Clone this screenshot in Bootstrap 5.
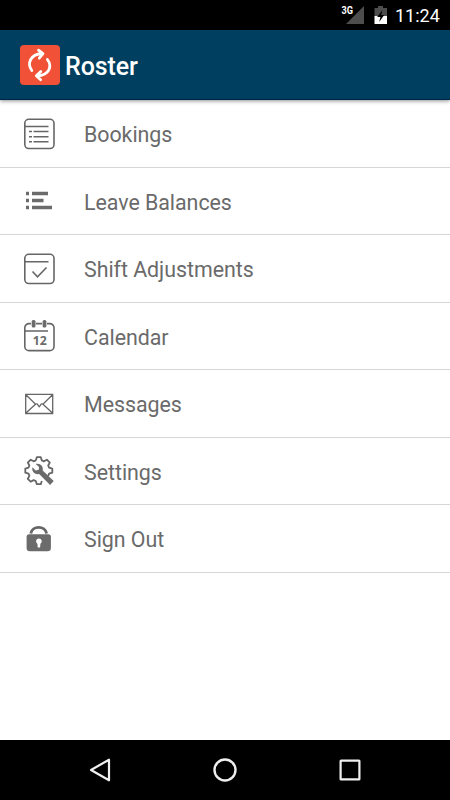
<!DOCTYPE html>
<html lang="en">
<head>
<meta charset="utf-8">
<meta name="viewport" content="width=device-width, initial-scale=1">
<title>Roster</title>
<link href="https://cdn.jsdelivr.net/npm/bootstrap@5.3.0/dist/css/bootstrap.min.css" rel="stylesheet">
<style>
  body { font-family: Roboto, sans-serif; height: 800px; overflow: hidden; }
  svg { display: block; flex: none; }
  .status-bar { height: 30px; padding-right: 10px; }
  .clock { font-size: 18px; line-height: 30px; font-weight: 400; margin-left: 8px; padding-top: 2px; width: 45px; white-space: nowrap; }
  .app-bar { height: 70px; padding: 0 20px; background: #003f5f; border-bottom: 1px solid #002447; box-shadow: 0 1px 4px rgba(0,0,0,.45); z-index: 1; }
  .app-title { font-size: 25px; line-height: 30px; font-weight: 500; margin-left: 5px; padding-top: 4px; letter-spacing: -.1px; }
  .menu-row { height: 67.5px; padding: 1px 21px 0; border-bottom: 1px solid #d6d6d6 !important; color: #6a6a6a; font-size: 21.4px; }
  .menu-row span { margin-left: 27px; padding-top: 3px; letter-spacing: -.04px; }
  .menu-row svg { fill: none; stroke: #666; stroke-width: 1.6; }
  .menu-row .solid { fill: #6b6b6b; stroke: none; }
  .nav-keys { height: 60px; padding: 0 87px; }
</style>
<script src="https://cdn.jsdelivr.net/npm/bootstrap@5.3.0/dist/js/bootstrap.bundle.min.js"></script>
</head>
<body class="d-flex flex-column bg-white m-0">

<div class="status-bar d-flex align-items-center justify-content-end bg-black text-white">
  <svg width="48" height="30" viewBox="0 0 48 30">
    <path d="M25 6V24H7z" fill="#4d4d4d"/>
    <text x="2.500" y="14" font-size="10" font-weight="700" fill="#fff" textLength="11.500" lengthAdjust="spacingAndGlyphs">3G</text>
    <path d="M39 6h5v2h4v9H35.500V8H39z" fill="#4d4d4d"/>
    <path d="M35.500 16H48v8H35.500z" fill="#fff"/>
    <path d="M43.500 10l-5.300 7h3.200l-1.200 5 5-7h-3z" fill="#000"/>
  </svg>
  <div class="clock">11:24</div>
</div>

<header class="app-bar d-flex align-items-center position-relative text-white">
  <svg width="40" height="40" viewBox="0 0 40 40">
    <rect width="40" height="40" rx="4" fill="#f15136"/>
    <g fill="none" stroke="#fff" stroke-width="2.800" stroke-linecap="round" stroke-linejoin="round">
      <path d="M11.800 25.500C7 19 9.800 9 22.500 8.500M18.500 5.200L23 8.700L19.300 13.200"/>
      <path d="M27.400 14.500C32.200 21 30 30 17 31M20.800 26.500L16.300 30.800L20.600 34.800"/>
    </g>
  </svg>
  <h1 class="app-title mb-0">Roster</h1>
</header>

<main class="flex-grow-1">
  <div class="list-group list-group-flush">
    <a class="menu-row d-flex align-items-center text-decoration-none" href="#">
      <svg width="36" height="36" viewBox="0 0 36 36">
        <rect x="3.800" y="3.300" width="29.200" height="29.200" rx="4"/>
        <path d="M4 10.500H27.500M12.500 15.500H27.500M12.500 20.700H27.500M12.500 25.700H27.500M8 15.500h3M8 20.700h3M8 25.700h3"/>
      </svg><span>Bookings</span>
    </a>
    <a class="menu-row d-flex align-items-center text-decoration-none" href="#">
      <svg width="36" height="36" viewBox="0 0 36 36">
        <path class="solid" d="M5 8.800h3v3.500H5zM11 8.800h16v3.500H11zM5 15.800h3v3.500H5zM11 15.800h11.500v3.500H11zM5 22.800h3v3.500H5zM11 22.800h20v3.500H11z"/>
      </svg><span>Leave Balances</span>
    </a>
    <a class="menu-row d-flex align-items-center text-decoration-none" href="#">
      <svg width="36" height="36" viewBox="0 0 36 36">
        <rect x="3.800" y="3.300" width="29.200" height="29.200" rx="4"/>
        <path d="M4 10.800H27.500M11.500 20.500L16.500 25.800L25.500 16.500"/>
      </svg><span>Shift Adjustments</span>
    </a>
    <a class="menu-row d-flex align-items-center text-decoration-none" href="#">
      <svg width="36" height="36" viewBox="0 0 36 36">
        <path d="M10 5.600H8a4.200 4.200 0 0 0-4.200 4.200V28.400a4.200 4.200 0 0 0 4.200 4.200H28.800a4.200 4.200 0 0 0 4.200-4.200V9.800a4.200 4.200 0 0 0-4.200-4.200H26M15 5.600H21M4 13H27"/>
        <g class="solid"><rect x="10.700" y="2" width="3.800" height="7.600" rx="1.500"/><rect x="21.600" y="2" width="3.800" height="7.600" rx="1.500"/></g>
        <text class="solid" x="11.800" y="26.600" font-family="Open Sans, sans-serif" font-size="12.500" font-weight="700" textLength="14" lengthAdjust="spacingAndGlyphs">12</text>
      </svg><span>Calendar</span>
    </a>
    <a class="menu-row d-flex align-items-center text-decoration-none" href="#">
      <svg width="36" height="36" viewBox="0 0 36 36">
        <path stroke-width="1.300" d="M4.700 8.300H31.700V27.500H4.700zM4.700 8.500L14.500 18.200Q16 17.200 17 19.200L18.200 20.800L19.500 19.200Q20.500 17.200 22 18.200L31.700 8.500M4.700 27.300L14.500 18.200M31.700 27.300L22 18.200"/>
      </svg><span>Messages</span>
    </a>
    <a class="menu-row d-flex align-items-center text-decoration-none" href="#">
      <svg width="36" height="36" viewBox="0 0 36 36">
        <g transform="translate(17.800 17.700)">
          <path stroke-width="1.800" stroke-linejoin="round" d="M-3-10.300L-2-13.500H2L3-10.300L5.200-9.400L8.100-11L11-8.100L9.400-5.200L10.300-3L13.500-2V2L10.300 3L9.400 5.200M3 10.300L2 13.500H-2L-3 10.300L-5.200 9.400L-8.100 11L-11 8.100L-9.400 5.200L-10.300 3L-13.500 2V-2L-10.300-3L-9.400-5.200L-11-8.100L-8.100-11L-5.200-9.400L-3-10.300"/>
          <path class="solid" d="M-3-6.800C1-8 5-4.500 3.900-.2L14.900 10.400L11.300 14.300L.3 3.300C-3.500 4.200-7.400 1-6.400-3.500L-3.200-.2L0-.9L.2-3.600z"/>
        </g>
      </svg><span>Settings</span>
    </a>
    <a class="menu-row d-flex align-items-center text-decoration-none" href="#">
      <svg width="36" height="36" viewBox="0 0 36 36">
        <path stroke-width="2.900" d="M10.600 12.500C12 4.300 25 4.300 26.400 12.500" transform="translate(-.8 0)"/>
        <path class="solid" fill-rule="evenodd" transform="translate(-.4 0)" d="M9 13.300H27.800a2.500 2.500 0 0 1 2.500 2.500V27a3.300 3.300 0 0 1-3.300 3.300H9.300A3.300 3.300 0 0 1 6 27V15.800a2.500 2.500 0 0 1 2.500-2.500zM18.300 17.500a2.800 2.800 0 0 0-1.500 5.200l.3 3.800h2.400l.3-3.800a2.800 2.800 0 0 0-1.500-5.200z"/>
      </svg><span>Sign Out</span>
    </a>
  </div>
</main>

<nav class="nav-keys d-flex align-items-center justify-content-between bg-black">
  <svg width="26" height="26" viewBox="0 0 26 26" fill="none" stroke="#efefef" stroke-width="2.200" stroke-linejoin="round"><path d="M22 2.700V23.300L4 13z"/></svg>
  <svg width="26" height="26" viewBox="0 0 26 26" fill="none" stroke="#efefef" stroke-width="2.400"><circle cx="13" cy="13" r="10.500"/></svg>
  <svg width="26" height="26" viewBox="0 0 26 26" fill="none" stroke="#efefef" stroke-width="2.200"><rect x="3.600" y="3.600" width="18.800" height="18.800" rx=".5"/></svg>
</nav>
</body>
</html>
